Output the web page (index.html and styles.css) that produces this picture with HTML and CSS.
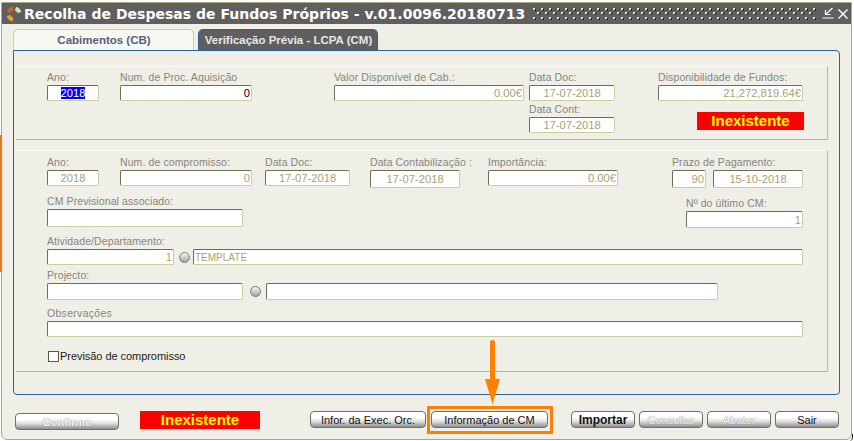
FILE: index.html
```html
<!DOCTYPE html>
<html lang="pt">
  <head>
    <meta charset="UTF-8" />
    <title>Recolha de Despesas de Fundos Próprios</title>
    <link rel="stylesheet" href="styles.css">
  </head>
  <body>
    <div class="strip"></div>
    <div class="window">
      <div class="titlebar">
        <svg class="logo" width="16" height="16" viewBox="0 0 16 16" fill="none" stroke-width="4">
          <path d="M2.6 6.5 A5.6 5.6 0 0 1 7 2.5" stroke="#c9691f" />
          <path d="M9.5 2.6 A5.6 5.6 0 0 1 13.4 6.5" stroke="#e3d9c0" />
          <path d="M2.6 9.5 A5.6 5.6 0 0 0 7 13.5" stroke="#eb9a2c" />
        </svg>
        <span class="title">Recolha de Despesas de Fundos Próprios - v.01.0096.20180713</span>
        <svg class="dots" width="284" height="12">
          <defs>
            <pattern id="dotgrid" width="8" height="9" patternUnits="userSpaceOnUse">
              <rect x="0" y="0" width="2" height="2" fill="#e4e4c0" />
              <rect x="2" y="1" width="1" height="2" fill="#111" />
              <rect x="4" y="4" width="2" height="2" fill="#e4e4c0" />
              <rect x="6" y="5" width="1" height="2" fill="#111" />
            </pattern>
          </defs>
          <rect width="284" height="12" fill="url(#dotgrid)" />
        </svg>
        <svg class="winbtn" width="12" height="12" viewBox="0 0 12 12">
          <path d="M10.5 1 L4 7 M3.5 3 V7.5 H8.5 M0.5 11 H11.5" stroke="#fff" fill="none" stroke-width="1.2" />
        </svg>
        <svg class="winbtn" width="10" height="10" viewBox="0 0 10 10">
          <path d="M0.5 0.5 L9.5 9.5 M9.5 0.5 L0.5 9.5" stroke="#fff" fill="none" stroke-width="1.4" />
        </svg>
      </div>

      <div class="tabs">
        <div class="tab">Cabimentos (CB)</div>
        <div class="tab tab-active">Verificação Prévia - LCPA (CM)</div>
      </div>

      <div class="panel">
        <div class="section section-top">
          <div class="row">
            <div class="field w-ano"><label>Ano:</label><div class="input center"><span class="selected">2018</span></div></div>
            <div class="field w-num ml-21"><label>Num. de Proc. Aquisição</label><div class="input right dark">0</div></div>
            <div class="field w-valor ml-82"><label>Valor Disponível de Cab.:</label><div class="input right">0.00€</div></div>
            <div class="stack ml-5">
              <div class="field w-date"><label>Data Doc:</label><div class="input center">17-07-2018</div></div>
              <div class="field w-date gap-2"><label>Data Cont:</label><div class="input center">17-07-2018</div></div>
            </div>
            <div class="stack ml-43">
              <div class="field w-disp"><label>Disponibilidade de Fundos:</label><div class="input right">21,272,819.64€</div></div>
              <div class="status status-top">Inexistente</div>
            </div>
          </div>
        </div>

        <div class="section section-main">
          <div class="row">
            <div class="field w-ano"><label>Ano:</label><div class="input center">2018</div></div>
            <div class="field w-num ml-21"><label>Num. de compromisso:</label><div class="input right">0</div></div>
            <div class="field w-doc ml-13"><label>Data Doc:</label><div class="input center">17-07-2018</div></div>
            <div class="field w-cont ml-20"><label>Data Contabilização :</label><div class="input tall center">17-07-2018</div></div>
            <div class="field w-imp ml-28"><label>Importância:</label><div class="input right">0.00€</div></div>
            <div class="field ml-54">
              <label>Prazo de Pagamento:</label>
              <div class="pair">
                <div class="input tall right w-dias">90</div>
                <div class="input tall center w-prazo">15-10-2018</div>
              </div>
            </div>
          </div>

          <div class="row row-cm">
            <div class="field w-cm"><label>CM Previsional associado:</label><div class="input tall"></div></div>
            <div class="field w-ultimo push"><label>Nº do último CM:</label><div class="input mid right">1</div></div>
          </div>

          <div class="row row-ativ">
            <div class="field grow">
              <label>Atividade/Departamento:</label>
              <div class="pair">
                <div class="input right w-ativ">1</div>
                <span class="radio"></span>
                <div class="input grow template">TEMPLATE</div>
              </div>
            </div>
          </div>

          <div class="row row-proj">
            <div class="field grow">
              <label>Projecto:</label>
              <div class="pair">
                <div class="input mid w-cm"></div>
                <span class="radio radio-proj"></span>
                <div class="input mid w-proj"></div>
              </div>
            </div>
          </div>

          <div class="row row-obs">
            <div class="field grow"><label class="label-obs">Observações</label><div class="input"></div></div>
          </div>

          <div class="check-row"><span class="checkbox"></span>Previsão de compromisso</div>
        </div>
      </div>

      <div class="footer">
        <button class="btn btn-confirm disabled" type="button">Confirme</button>
        <div class="status status-bottom">Inexistente</div>
        <button class="btn btn-infor" type="button">Infor. da Exec. Orc.</button>
        <div class="highlight"><button class="btn btn-cm" type="button">Informação de CM</button></div>
        <button class="btn btn-small strong" type="button">Importar</button>
        <button class="btn btn-small disabled" type="button">Consultar</button>
        <button class="btn btn-small disabled" type="button">Abater</button>
        <button class="btn btn-small" type="button">Sair</button>
      </div>
    </div>

    <div class="corner"></div>
    <svg class="arrow" width="15" height="65" viewBox="0 0 15 65">
      <path d="M5 2 Q5 0 7.5 0 Q10 0 10 2 V39 H15 L7.5 64 L0 39 H5 Z" fill="#ff7f00" />
    </svg>
  </body>
</html>
```

FILE: styles.css
```css
* {
  margin: 0;
  padding: 0;
  box-sizing: border-box;
}

body {
  width: 854px;
  height: 441px;
  overflow: hidden;
  position: relative;
  background-color: #fff;
  font-family: "Liberation Sans", Arial, sans-serif;
  font-size: 11px;
}

.strip {
  position: absolute;
  left: 0;
  top: 135px;
  width: 2px;
  height: 137px;
  background-color: #e8761c;
}

.corner {
  position: absolute;
  left: 848px;
  top: 434px;
  width: 5px;
  height: 7px;
  border-right: 1px solid #222;
  border-bottom-right-radius: 4px;
}

.window {
  width: 851px;
  height: 438px;
  margin-top: 2px;
  margin-left: 1px;
  border: 1px solid #a9a97c;
  border-radius: 0 0 6px 6px;
  background-color: #efefe7;
}

/* title */
.titlebar {
  display: flex;
  align-items: center;
  height: 21px;
  padding-left: 4px;
  background-color: #5f5f5f;
}

.logo {
  flex: none;
}

.title {
  margin-left: 2px;
  color: #fff;
  font-family: "DejaVu Sans", Verdana, sans-serif;
  font-size: 14px;
  font-weight: bold;
  letter-spacing: 0.02px;
  white-space: nowrap;
}

.dots {
  position: absolute;
  left: 533px;
  top: 8px;
}

.winbtn {
  position: absolute;
  top: 7px;
  left: 822px;
}

.winbtn + .winbtn {
  top: 9px;
  left: 838px;
}

/* tabs */
.tabs {
  display: flex;
  height: 26px;
  padding: 5px 0 0 11px;
}

.tab {
  width: 181px;
  height: 21px;
  margin-right: 4px;
  padding: 4px 0 0 1px;
  border: 1px solid #c9cfa6;
  border-bottom: none;
  border-radius: 5px 5px 0 0;
  background-color: #f8f8f2;
  color: #55607a;
  font-size: 11.5px;
  font-weight: bold;
  text-align: center;
}

.tab-active {
  width: 180px;
  border-color: #2a6496;
  background-color: #5f5f5f;
  color: #e8e8e8;
}

/* main panel */
.panel {
  width: 827px;
  height: 345px;
  margin-left: 11px;
  padding: 15px 0 0 2px;
  border: 1px solid #2a6496;
  border-radius: 0 4px 4px 4px;
}

.section {
  width: 812px;
  border-top: 1px solid #f8f8f4;
  border-right: 1px solid #b5b5ad;
  padding-left: 31px;
  padding-right: 24px;
}

.section-top {
  height: 74px;
  padding-top: 4px;
  border-bottom: 1px solid #b5b5ad;
}

.section-main {
  height: 222px;
  margin-top: 10px;
  padding-top: 5px;
  border-bottom: 1px solid #b5b5ad;
}

.row {
  display: flex;
  align-items: flex-start;
}

.row-cm,
.row-ativ,
.row-obs {
  margin-top: 7px;
}

.row-proj {
  margin-top: 4px;
}

.field {
  display: flex;
  flex-direction: column;
  flex: none;
}

.stack {
  display: flex;
  flex-direction: column;
  flex: none;
}

.pair {
  display: flex;
  align-items: center;
}

.grow {
  flex: 1;
}

.push {
  margin-left: auto;
  margin-top: 2px;
}

.gap-2 {
  margin-top: 2px;
}

label {
  display: block;
  height: 14px;
  line-height: 12px;
  color: #85857d;
  font-size: 10.5px;
  letter-spacing: 0.1px;
  white-space: nowrap;
}

.label-obs {
  letter-spacing: 0.3px;
}

.input {
  height: 16px;
  padding: 0 1px;
  border: 1px solid #c8cf9e;
  border-top-color: #6e6e58;
  border-left-color: #6e6e58;
  border-radius: 2px;
  background-color: #fff;
  color: #a3a378;
  line-height: 15px;
  font-size: 11.2px;
  white-space: nowrap;
}

.tall {
  height: 18px;
  line-height: 17px;
}

.mid {
  height: 17px;
  line-height: 16px;
}

.template {
  font-size: 10px;
}

.center {
  text-align: center;
}

.right {
  text-align: right;
}

.dark {
  color: #000;
}

.selected {
  background-color: #00f;
  color: #fff;
}

/* widths of the form fields */
.w-ano { width: 52px; }
.w-num { width: 132px; }
.w-valor { width: 190px; }
.w-date { width: 86px; }
.w-doc { width: 85px; }
.w-disp { width: 145px; }
.w-cont { width: 90px; }
.w-imp { width: 130px; }
.w-dias { width: 34px; margin-right: 7px; }
.w-prazo { width: 90px; }
.w-cm { width: 196px; }
.w-ultimo { width: 117px; }
.w-ativ { width: 127px; }
.w-proj { width: 452px; }

.ml-5 { margin-left: 5px; }
.ml-13 { margin-left: 13px; }
.ml-20 { margin-left: 20px; }
.ml-21 { margin-left: 21px; }
.ml-28 { margin-left: 28px; }
.ml-43 { margin-left: 43px; }
.ml-54 { margin-left: 54px; }
.ml-82 { margin-left: 82px; }

.status {
  background-color: #f00;
  color: #ff0;
  font-size: 15px;
  font-weight: bold;
  line-height: 18px;
  text-align: center;
}

.status-top {
  width: 107px;
  height: 18px;
  margin: 11px -1px 0 39px;
}

.status-bottom {
  width: 120px;
  height: 18px;
  margin: -2px 50px 0 21px;
}

.radio {
  width: 11px;
  height: 11px;
  margin: 0 3px 0 5px;
  border: 1px solid #777;
  border-radius: 50%;
  background: linear-gradient(#f6f6f6, #a4a4a4);
  flex: none;
}

.radio-proj {
  margin: 0 5px 0 7px;
}

.check-row {
  display: flex;
  align-items: center;
  margin-top: 13px;
  margin-left: 1px;
  color: #222;
  font-size: 11px;
  letter-spacing: -0.05px;
}

.checkbox {
  width: 11px;
  height: 11px;
  margin-right: 1px;
  border: 1px solid #555;
  background-color: #fff;
}

/* buttons along the bottom */
.footer {
  display: flex;
  align-items: flex-start;
  padding: 18px 0 0 13px;
}

.btn {
  height: 17px;
  border: 1px solid #6f6f6f;
  border-radius: 4px;
  background: linear-gradient(#fff 35%, #e4e4e4 60%, #8d8d8d);
  color: #111;
  font-family: "Liberation Sans", Arial, sans-serif;
  font-size: 11px;
  line-height: 14px;
}

.btn-confirm {
  width: 104px;
  font-weight: bold;
}

.btn-infor {
  width: 116px;
  margin-top: -2px;
}

.highlight {
  width: 126px;
  height: 28px;
  margin: -7px 18px 0 1px;
  padding: 2px 0 0 1px;
  border: 3px solid #ff7f00;
}

.btn-cm {
  width: 117px;
}

.btn-small {
  width: 64px;
  margin-top: -2px;
  margin-right: 4px;
}

.strong {
  font-size: 12px;
  font-weight: bold;
}

.disabled {
  color: #f8f8f8;
  text-shadow: 0 0 1px #666;
}

.arrow {
  position: absolute;
  left: 485px;
  top: 340px;
}
```
